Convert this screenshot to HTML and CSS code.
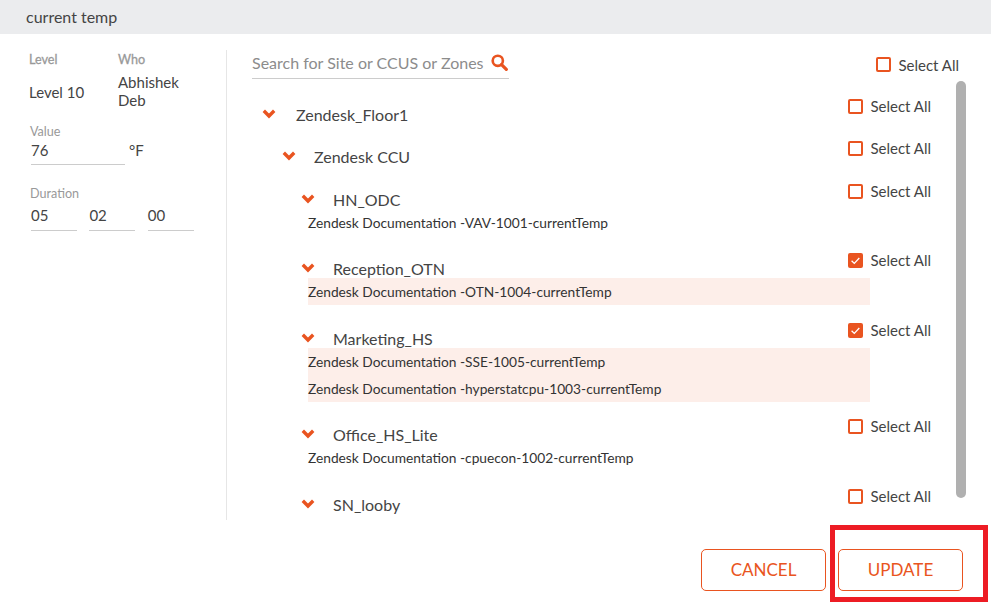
FILE: index.html
```html
<!DOCTYPE html>
<html lang="en">
<head>
    <meta charset="UTF-8">
    <title>current temp</title>
    <link rel="stylesheet" href="styles.css">
</head>
<body>
    <div class="dialog">
        <div class="dialog-title">current temp</div>
        <div class="dialog-body">
            <div class="side">
                <div class="side-top">
                    <div class="info">
                        <div class="info-label">Level</div>
                        <div class="info-level">Level 10</div>
                    </div>
                    <div class="info">
                        <div class="info-label">Who</div>
                        <div class="info-who">Abhishek Deb</div>
                    </div>
                </div>
                <div class="field-label value-label">Value</div>
                <div class="value-row">
                    <div class="field value-field">76</div>
                    <span class="unit">°F</span>
                </div>
                <div class="field-label duration-label">Duration</div>
                <div class="duration-row">
                    <div class="field">05</div>
                    <div class="field">02</div>
                    <div class="field">00</div>
                </div>
            </div>
            <div class="main">
                <div class="main-top">
                    <div class="search">
                        <span class="search-text">Search for Site or CCUS or Zones</span>
                        <svg class="search-icon" viewBox="0 0 18 18" width="17" height="17"><circle cx="7.2" cy="7.2" r="5.4" fill="none" stroke="#e95420" stroke-width="2.8"/><path d="M11.2 11.2l5 5" stroke="#e95420" stroke-width="3.4" stroke-linecap="round"/></svg>
                    </div>
                    <label class="check-label top-check"><span class="check"></span>Select All</label>
                </div>
                <div class="tree">
                    <div class="row row-floor">
                        <svg class="chevron" viewBox="0 0 14 10" width="14" height="10"><path d="M1.8 1.8L7 7l5.2-5.2" fill="none" stroke="#e95420" stroke-width="3.4"/></svg>
                        <span class="row-name">Zendesk_Floor1</span>
                        <label class="check-label"><span class="check"></span>Select All</label>
                    </div>
                    <div class="row row-ccu">
                        <svg class="chevron" viewBox="0 0 14 10" width="14" height="10"><path d="M1.8 1.8L7 7l5.2-5.2" fill="none" stroke="#e95420" stroke-width="3.4"/></svg>
                        <span class="row-name">Zendesk CCU</span>
                        <label class="check-label"><span class="check"></span>Select All</label>
                    </div>

                    <div class="zone zone-tight">
                        <div class="row zone-head">
                            <svg class="chevron" viewBox="0 0 14 10" width="14" height="10"><path d="M1.8 1.8L7 7l5.2-5.2" fill="none" stroke="#e95420" stroke-width="3.4"/></svg>
                            <span class="row-name">HN_ODC</span>
                            <label class="check-label"><span class="check"></span>Select All</label>
                        </div>
                        <div class="points">
                            <div class="point">Zendesk Documentation -VAV-1001-currentTemp</div>
                        </div>
                    </div>

                    <div class="zone">
                        <div class="row zone-head">
                            <svg class="chevron" viewBox="0 0 14 10" width="14" height="10"><path d="M1.8 1.8L7 7l5.2-5.2" fill="none" stroke="#e95420" stroke-width="3.4"/></svg>
                            <span class="row-name">Reception_OTN</span>
                            <label class="check-label"><span class="check checked"><svg viewBox="0 0 15 15" width="15" height="15"><path d="M3.6 7.8l2.7 2.6 5-5.4" fill="none" stroke="#fff" stroke-width="1.3"/></svg></span>Select All</label>
                        </div>
                        <div class="points selected">
                            <div class="point">Zendesk Documentation -OTN-1004-currentTemp</div>
                        </div>
                    </div>

                    <div class="zone zone-tight">
                        <div class="row zone-head">
                            <svg class="chevron" viewBox="0 0 14 10" width="14" height="10"><path d="M1.8 1.8L7 7l5.2-5.2" fill="none" stroke="#e95420" stroke-width="3.4"/></svg>
                            <span class="row-name">Marketing_HS</span>
                            <label class="check-label"><span class="check checked"><svg viewBox="0 0 15 15" width="15" height="15"><path d="M3.6 7.8l2.7 2.6 5-5.4" fill="none" stroke="#fff" stroke-width="1.3"/></svg></span>Select All</label>
                        </div>
                        <div class="points selected">
                            <div class="point">Zendesk Documentation -SSE-1005-currentTemp</div>
                            <div class="point">Zendesk Documentation -hyperstatcpu-1003-currentTemp</div>
                        </div>
                    </div>

                    <div class="zone">
                        <div class="row zone-head">
                            <svg class="chevron" viewBox="0 0 14 10" width="14" height="10"><path d="M1.8 1.8L7 7l5.2-5.2" fill="none" stroke="#e95420" stroke-width="3.4"/></svg>
                            <span class="row-name">Office_HS_Lite</span>
                            <label class="check-label"><span class="check"></span>Select All</label>
                        </div>
                        <div class="points">
                            <div class="point">Zendesk Documentation -cpuecon-1002-currentTemp</div>
                        </div>
                    </div>

                    <div class="zone">
                        <div class="row zone-head">
                            <svg class="chevron" viewBox="0 0 14 10" width="14" height="10"><path d="M1.8 1.8L7 7l5.2-5.2" fill="none" stroke="#e95420" stroke-width="3.4"/></svg>
                            <span class="row-name">SN_looby</span>
                            <label class="check-label"><span class="check"></span>Select All</label>
                        </div>
                    </div>
                </div>
                <div class="scroll-thumb"></div>
            </div>
        </div>
        <div class="dialog-footer">
            <button class="btn">CANCEL</button>
            <button class="btn">UPDATE</button>
        </div>
    </div>
    <div class="highlight-box"></div>
</body>
</html>
```

FILE: styles.css
```css
* {
    margin: 0;
    padding: 0;
    box-sizing: border-box;
    font-family: 'Lato', 'Open Sans', sans-serif;
}

body {
    width: 991px;
    height: 613px;
    background: white;
    color: #444;
    overflow: hidden;
    position: relative;
}

.dialog-title {
    height: 34px;
    line-height: 34px;
    padding-left: 26px;
    font-size: 16px;
    background: #ebecee;
}

.dialog-body {
    display: flex;
    height: 486px;
    padding-top: 16px;
}

.side {
    width: 227px;
    border-right: 1px solid #e6e6e6;
    padding-left: 29px;
}

.side-top {
    display: flex;
}

.info {
    width: 89px;
}

.info-label {
    font-size: 12.6px;
    line-height: 20px;
    color: #999;
    -webkit-text-stroke: 0.3px #999;
}

.info-level {
    font-size: 15px;
    line-height: 18px;
    margin-top: 13px;
}

.info-who {
    font-size: 15px;
    line-height: 18px;
    width: 70px;
    margin-top: 3px;
}

.field-label {
    font-size: 12.6px;
    line-height: 16px;
    color: #999;
    margin-left: 1px;
}

.value-label {
    margin-top: 15px;
}

.value-row {
    display: flex;
    align-items: flex-start;
    margin-left: 2px;
    margin-top: 1px;
}

.field {
    width: 46px;
    height: 25px;
    line-height: 19px;
    font-size: 15px;
    border-bottom: 1px solid #ccc;
}

.value-field {
    width: 94px;
    height: 24px;
}

.unit {
    font-size: 15px;
    line-height: 19px;
    margin-left: 4px;
}

.duration-label {
    margin-top: 21px;
}

.duration-row {
    display: flex;
    gap: 12.4px;
    margin-left: 2px;
    margin-top: 4px;
}

.main {
    flex: 1;
    position: relative;
    padding-left: 25px;
}

.main-top {
    display: flex;
    justify-content: space-between;
    height: 43px;
}

.search {
    width: 257px;
    height: 29px;
    border-bottom: 1px solid #ccc;
    display: flex;
    justify-content: space-between;
    align-items: center;
    padding-bottom: 4px;
}

.search-text {
    font-size: 16px;
    color: #8c8c8c;
    white-space: nowrap;
}

.search-icon {
    margin-right: 1px;
}

.check-label {
    display: flex;
    align-items: center;
    gap: 7px;
    font-size: 15px;
    color: #444;
    white-space: nowrap;
}

.top-check {
    height: 15px;
    margin: 7px 32px 0 0;
}

.check {
    width: 15px;
    height: 15px;
    border: 2px solid #e95420;
    border-radius: 2px;
    display: block;
    flex: none;
}

.check.checked {
    border: none;
    background: #e95420;
}

.check.checked svg {
    display: block;
}

.tree {
    position: relative;
    width: 679px;
}

.row {
    display: flex;
    align-items: center;
    font-size: 16px;
    color: #444;
}

.row .check-label {
    margin-left: auto;
    position: relative;
    top: -8px;
}

.chevron {
    flex: none;
}

.row-floor {
    height: 42px;
}

.row-floor .chevron {
    margin-left: 10px;
}

.row-floor .row-name {
    margin-left: 20px;
}

.row-ccu {
    height: 42px;
    margin-bottom: 13px;
}

.row-ccu .chevron {
    margin-left: 30px;
}

.row-ccu .row-name {
    margin-left: 18px;
}

.zone {
    margin-bottom: 24px;
}

.zone-tight {
    margin-bottom: 23px;
}

.zone-head {
    height: 19px;
    align-items: flex-start;
}

.zone-head .chevron {
    margin-left: 49px;
    margin-top: 4px;
}

.zone-head .row-name {
    margin-left: 18px;
}

.points {
    margin-left: 56px;
    width: 562px;
}

.points.selected {
    background: #fdeee9;
}

.point {
    height: 27px;
    line-height: 27px;
    font-size: 13.75px;
    color: #333;
    white-space: nowrap;
}

.scroll-thumb {
    position: absolute;
    left: 729px;
    top: 31px;
    width: 10px;
    height: 417px;
    border-radius: 5px;
    background: #b0b0b0;
}

.dialog-footer {
    display: flex;
    justify-content: flex-end;
    gap: 12px;
    padding: 29px 28px 0 0;
}

.btn {
    width: 125px;
    height: 42px;
    background: white;
    color: #e95420;
    border: 1px solid #e95420;
    border-radius: 5px;
    font-size: 17px;
    padding-bottom: 2px;
}

.highlight-box {
    position: absolute;
    left: 830px;
    top: 525px;
    width: 158px;
    height: 77px;
    border: 5px solid #ed1c24;
}
```
